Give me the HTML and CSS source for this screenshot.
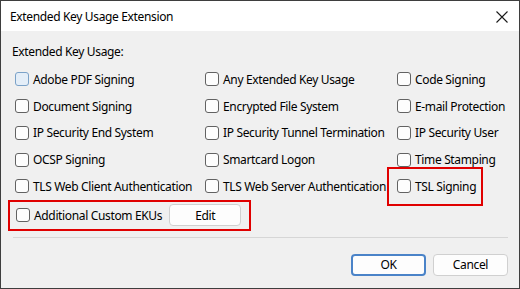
FILE: index.html
```html
<!DOCTYPE html>
<html lang="en">
  <head>
    <meta charset="UTF-8" />
    <title>Extended Key Usage Extension</title>
    <link rel="stylesheet" href="styles.css">
  </head>
  <body>
    <div class="window">
      <div class="titlebar">
        <span class="title">Extended Key Usage Extension</span>
        <span class="close">
          <svg width="12" height="12" viewBox="0 0 12 12">
            <path d="M0.5 0.5 L11.5 11.5 M11.5 0.5 L0.5 11.5" stroke="#1a1a1a" stroke-width="1.1" fill="none" />
          </svg>
        </span>
      </div>
      <div class="content">
        <div class="group-label">Extended Key Usage:</div>
        <div class="grid">
          <label class="item"><span class="box box-hover"></span>Adobe PDF Signing</label>
          <label class="item"><span class="box"></span>Any Extended Key Usage</label>
          <label class="item"><span class="box"></span>Code Signing</label>
          <label class="item"><span class="box"></span>Document Signing</label>
          <label class="item"><span class="box"></span>Encrypted File System</label>
          <label class="item"><span class="box"></span>E-mail Protection</label>
          <label class="item"><span class="box"></span>IP Security End System</label>
          <label class="item"><span class="box"></span>IP Security Tunnel Termination</label>
          <label class="item"><span class="box"></span>IP Security User</label>
          <label class="item"><span class="box"></span>OCSP Signing</label>
          <label class="item"><span class="box"></span>Smartcard Logon</label>
          <label class="item"><span class="box"></span>Time Stamping</label>
          <label class="item"><span class="box"></span>TLS Web Client Authentication</label>
          <label class="item"><span class="box"></span>TLS Web Server Authentication</label>
          <label class="item marked"><span class="box"></span>TSL Signing</label>
        </div>
        <div class="custom">
          <label class="item"><span class="box"></span>Additional Custom EKUs</label>
          <button class="btn edit">Edit</button>
        </div>
        <div class="separator"></div>
        <div class="actions">
          <button class="btn ok">OK</button>
          <button class="btn">Cancel</button>
        </div>
      </div>
    </div>
  </body>
</html>
```
FILE: styles.css
```css
html,
body {
  margin: 0;
  padding: 0;
}
body {
  font-family: "Noto Sans", "Open Sans", sans-serif;
  font-size: 12px;
  letter-spacing: -0.35px;
  color: #000;
  background: #f0f0f0;
}
.window {
  box-sizing: border-box;
  width: 520px;
  height: 289px;
  border: 1px solid #3e3e3e;
  background: #f0f0f0;
  display: flex;
  flex-direction: column;
}
.titlebar {
  height: 30px;
  background: #fff;
  display: flex;
  align-items: center;
  justify-content: space-between;
  padding: 0 11px 0 9px;
}
.title {
  margin-top: 1px;
}
.close {
  display: flex;
  margin-top: 1px;
}
.content {
  padding: 0 11px 0 14px;
}
.group-label {
  height: 20px;
  line-height: 20px;
  margin: 11px 0 0 -3px;
}
.grid {
  display: grid;
  grid-template-columns: 190px 192px auto;
  grid-auto-rows: 26.75px;
  margin-top: 4px;
}
.item {
  display: flex;
  align-items: center;
  gap: 4px;
  white-space: nowrap;
}
.box {
  box-sizing: border-box;
  width: 14px;
  height: 14px;
  border: 1px solid #626262;
  border-radius: 3px;
  background: #fdfdfd;
  flex: none;
}
.box-hover {
  border-color: #7ba2c8;
  background: #e4eef8;
}
/* 红框标注 */
.marked {
  position: relative;
  justify-self: start;
}
.marked::after {
  content: "";
  position: absolute;
  left: -10px;
  right: -7px;
  top: -6px;
  bottom: -6px;
  border: 2px solid #e00000;
}
.custom {
  box-sizing: border-box;
  width: 243px;
  height: 31px;
  margin: 0 0 0 -7px;
  border: 2px solid #e00000;
  padding: 0 0 0 6px;
  display: flex;
  align-items: center;
  gap: 7px;
}
.btn {
  box-sizing: border-box;
  height: 22px;
  font: inherit;
  letter-spacing: inherit;
  color: #000;
  background: #fdfdfd;
  border: 1px solid #d0d0d0;
  border-radius: 4px;
  padding: 0;
}
.edit {
  width: 72px;
}
.separator {
  height: 1px;
  background: #d6d6d6;
  margin: 6px 0 0 -2px;
}
.actions {
  display: flex;
  justify-content: flex-end;
  gap: 7px;
  margin-top: 16px;
}
.actions .btn {
  width: 75px;
}
.ok {
  border: 2px solid #4a83c8;
}
```
